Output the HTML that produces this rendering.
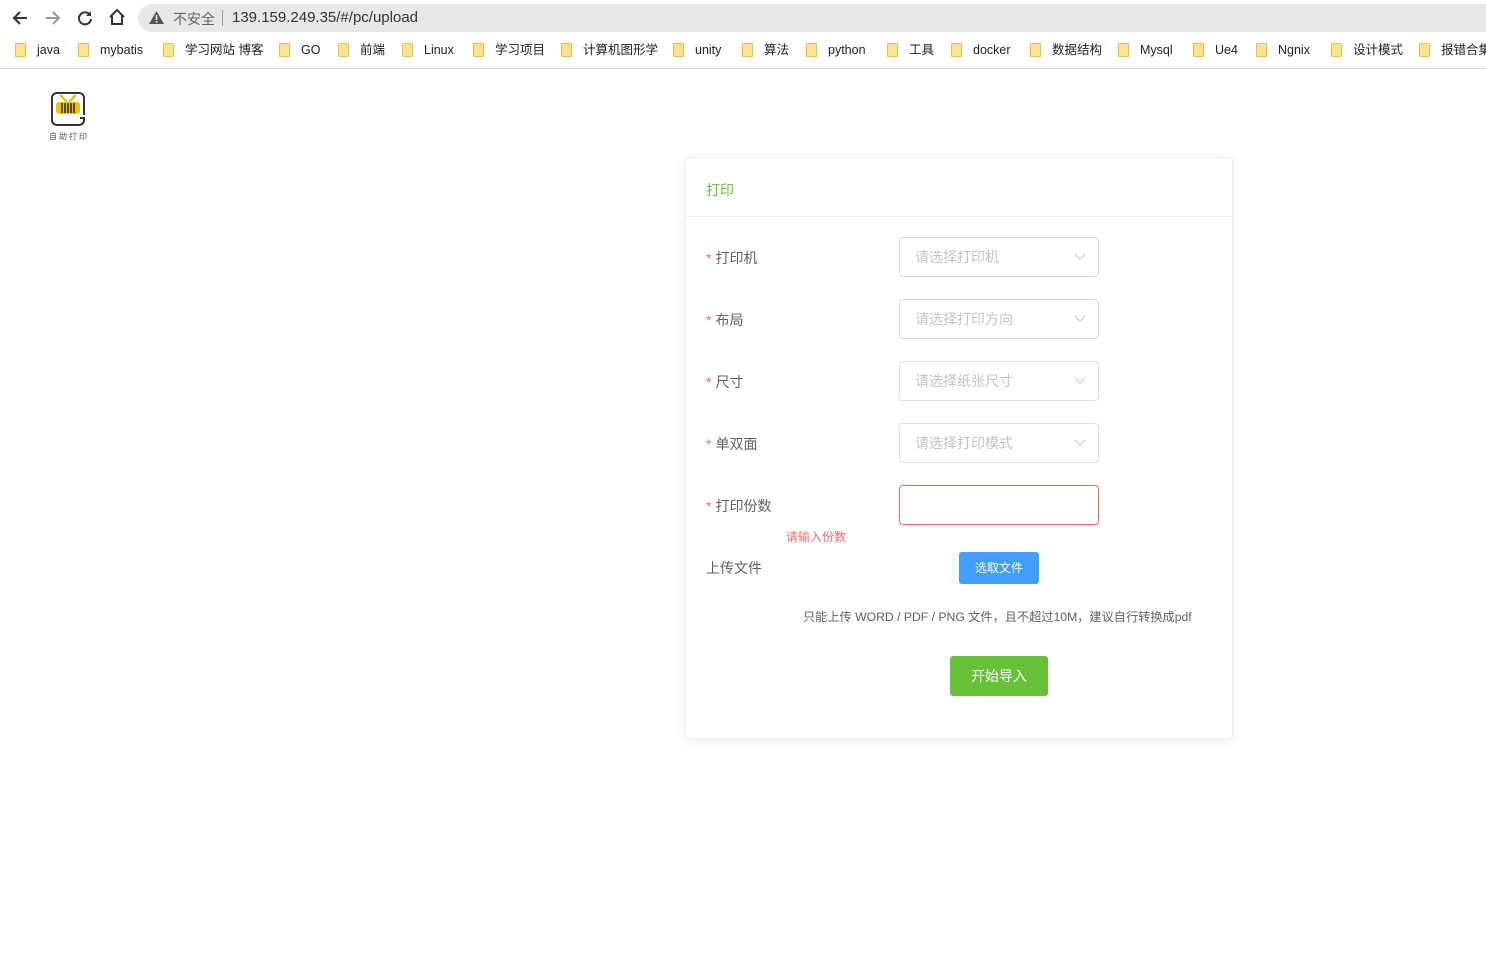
<!DOCTYPE html>
<html><head><meta charset="utf-8"><style>
*{margin:0;padding:0;box-sizing:border-box}
body{width:1486px;height:980px;background:#fff;font-family:"Liberation Sans","Noto Sans CJK SC",sans-serif;position:relative;overflow:hidden}
.a{position:absolute}
.addr{left:138px;top:4px;width:1400px;height:28px;background:#e8e8e8;border-radius:14px}
.bm{position:absolute;top:43px;font-size:12.5px;color:#222;line-height:14px;white-space:nowrap}
.fi{position:absolute;top:43px;width:11px;height:14px;background:#fbe38f;border:1px solid #e8c04a;border-radius:1px}
.lbl{font-size:14px;color:#606266}
.lbl b{color:#f56c6c;font-weight:normal;margin-right:4px}
.sel{position:absolute;left:899px;width:200px;height:40px;border:1px solid #dcdfe6;border-radius:4px;font-size:14px;color:#c0c4cc;padding-left:15px;line-height:38px}
.sel svg{position:absolute;right:12px;top:15px}
</style></head><body>
<svg class="a" style="left:11px;top:9px" width="18" height="18" viewBox="0 0 18 18"><path d="M16 9H3M9 3L3 9l6 6" stroke="#333" stroke-width="2" fill="none"/></svg>
<svg class="a" style="left:44px;top:9px" width="18" height="18" viewBox="0 0 18 18"><path d="M2 9h13M9 3l6 6-6 6" stroke="#999" stroke-width="2" fill="none"/></svg>
<svg class="a" style="left:76px;top:9px" width="18" height="18" viewBox="0 0 18 18"><path d="M14 6A6 6 0 1 0 15 10" stroke="#333" stroke-width="2" fill="none"/><path d="M15 2v5h-5z" fill="#333"/></svg>
<svg class="a" style="left:108px;top:8px" width="18" height="18" viewBox="0 0 18 18"><path d="M2 9L9 2l7 7M4 7v9h10V7" stroke="#333" stroke-width="2" fill="none"/></svg>
<div class="a addr"></div>
<svg class="a" style="left:149px;top:11px" width="15" height="13" viewBox="0 0 15 13"><path d="M7.5 0L15 13H0z" fill="#555"/><path d="M7.5 4v5M7.5 10v1.5" stroke="#fff" stroke-width="1.5"/></svg>
<div class="a" style="left:173px;top:9px;font-size:14px;color:#666">不安全</div>
<div class="a" style="left:222px;top:10px;width:1px;height:16px;background:#999"></div>
<div class="a" style="left:232px;top:9px;font-size:15px;color:#333">139.159.249.35/#/pc/upload</div>

<div class="fi" style="left:15px"></div><div class="bm" style="left:37px">java</div>
<div class="fi" style="left:78px"></div><div class="bm" style="left:100px">mybatis</div>
<div class="fi" style="left:163px"></div><div class="bm" style="left:185px">学习网站 博客</div>
<div class="fi" style="left:279px"></div><div class="bm" style="left:301px">GO</div>
<div class="fi" style="left:338px"></div><div class="bm" style="left:360px">前端</div>
<div class="fi" style="left:402px"></div><div class="bm" style="left:424px">Linux</div>
<div class="fi" style="left:473px"></div><div class="bm" style="left:495px">学习项目</div>
<div class="fi" style="left:561px"></div><div class="bm" style="left:583px">计算机图形学</div>
<div class="fi" style="left:673px"></div><div class="bm" style="left:695px">unity</div>
<div class="fi" style="left:742px"></div><div class="bm" style="left:764px">算法</div>
<div class="fi" style="left:806px"></div><div class="bm" style="left:828px">python</div>
<div class="fi" style="left:887px"></div><div class="bm" style="left:909px">工具</div>
<div class="fi" style="left:951px"></div><div class="bm" style="left:973px">docker</div>
<div class="fi" style="left:1030px"></div><div class="bm" style="left:1052px">数据结构</div>
<div class="fi" style="left:1118px"></div><div class="bm" style="left:1140px">Mysql</div>
<div class="fi" style="left:1193px"></div><div class="bm" style="left:1215px">Ue4</div>
<div class="fi" style="left:1256px"></div><div class="bm" style="left:1278px">Ngnix</div>
<div class="fi" style="left:1331px"></div><div class="bm" style="left:1353px">设计模式</div>
<div class="fi" style="left:1419px"></div><div class="bm" style="left:1441px">报错合集</div>
<div class="a" style="left:0;top:68px;width:1486px;height:1px;background:#d0d0d0"></div>

<svg class="a" style="left:50px;top:91px" width="36" height="36" viewBox="0 0 36 36"><path d="M34 24V7a5 5 0 0 0-5-5H7a5 5 0 0 0-5 5v22a5 5 0 0 0 5 5h22a5 5 0 0 0 5-5v-2h-4" stroke="#333" stroke-width="2" fill="none"/><path d="M10 4l7 7M26 4l-7 7" stroke="#e5b800" stroke-width="2"/><rect x="6" y="11" width="24" height="12" rx="3" fill="#f2c200"/><path d="M12 12v10M15 12v10M18 12v10M21 12v10M24 12v10" stroke="#222" stroke-width="1.5"/></svg>
<div class="a" style="left:49px;top:131px;font-size:8px;color:#555;letter-spacing:2px">自助打印</div>

<div class="a" style="left:685px;top:157px;width:548px;height:582px;border:1px solid #ebeef5;border-radius:4px;box-shadow:0 2px 12px rgba(0,0,0,.08)"></div>
<div class="a" style="left:686px;top:216px;width:546px;height:1px;background:#ebeef5"></div>
<div class="a" style="left:706px;top:180px;font-size:14px;color:#67c23a">打印</div>

<div class="a lbl" style="left:706px;top:248px"><b>*</b>打印机</div>
<div class="a lbl" style="left:706px;top:310px"><b>*</b>布局</div>
<div class="a lbl" style="left:706px;top:372px"><b>*</b>尺寸</div>
<div class="a lbl" style="left:706px;top:434px"><b>*</b>单双面</div>
<div class="a lbl" style="left:706px;top:496px"><b>*</b>打印份数</div>
<div class="a lbl" style="left:706px;top:558px">上传文件</div>

<div class="sel" style="top:237px">请选择打印机<svg width="12" height="8"><path d="M1 1l5 5 5-5" stroke="#c0c4cc" fill="none"/></svg></div>
<div class="sel" style="top:299px">请选择打印方向<svg width="12" height="8"><path d="M1 1l5 5 5-5" stroke="#c0c4cc" fill="none"/></svg></div>
<div class="sel" style="top:361px">请选择纸张尺寸<svg width="12" height="8"><path d="M1 1l5 5 5-5" stroke="#c0c4cc" fill="none"/></svg></div>
<div class="sel" style="top:423px">请选择打印模式<svg width="12" height="8"><path d="M1 1l5 5 5-5" stroke="#c0c4cc" fill="none"/></svg></div>
<div class="sel" style="top:485px;border-color:#f56c6c"></div>
<div class="a" style="left:786px;top:528px;font-size:12px;color:#f56c6c">请输入份数</div>

<div class="a" style="left:959px;top:552px;width:80px;height:32px;background:#409eff;border-radius:3px;color:#fff;font-size:12px;line-height:32px;text-align:center">选取文件</div>
<div class="a" style="left:803px;top:607px;font-size:12.2px;color:#606266;white-space:nowrap">只能上传 WORD / PDF / PNG 文件，且不超过10M，建议自行转换成pdf</div>
<div class="a" style="left:950px;top:656px;width:98px;height:40px;background:#67c23a;border-radius:3px;color:#fff;font-size:14px;line-height:40px;text-align:center">开始导入</div>
</body></html>
